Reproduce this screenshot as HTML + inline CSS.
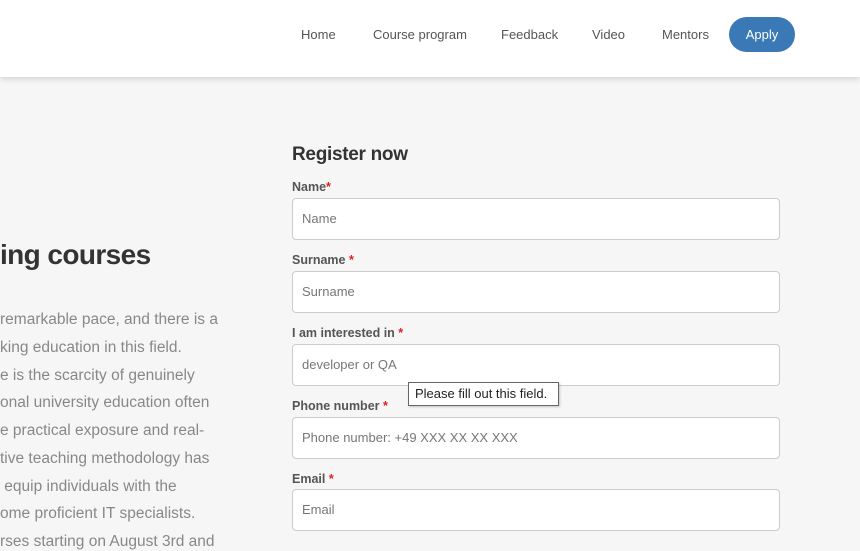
<!DOCTYPE html>
<html><head><meta charset="utf-8"><style>
*{margin:0;padding:0;box-sizing:border-box}
body{width:860px;height:550px;overflow:hidden;background:#f6f6f6;font-family:"Liberation Sans",sans-serif;position:relative}
.hdr{position:absolute;left:0;top:0;width:860px;height:77px;background:#fff;box-shadow:0 2px 6px rgba(0,0,0,.15)}
.nav{position:absolute;top:27px;font-size:13px;color:#555}
.apply{position:absolute;left:729px;top:17px;width:66px;height:35px;border-radius:18px;background:#3a78b6;color:#fff;font-size:13px;text-align:center;line-height:35px}
.h1{position:absolute;left:0;top:239px;font-size:28px;color:#333;font-weight:bold;letter-spacing:-.6px}
.p{position:absolute;left:0;font-size:15.5px;color:#888;white-space:nowrap}
.h2{position:absolute;left:292px;top:144px;font-size:19px;color:#333;font-weight:bold;letter-spacing:-.3px}
.lbl{position:absolute;left:292px;font-size:12.5px;font-weight:bold;color:#555}
.lbl b{color:#e02020}
.in{position:absolute;left:292px;width:488px;height:42px;background:#fff;border:1px solid #ccc;border-radius:4px;font-size:13px;color:#777;padding-left:9px;line-height:40px}
.tip{position:absolute;left:408px;top:382px;width:151px;height:24px;background:#fff;border:1px solid #666;box-shadow:1px 1px 2px rgba(0,0,0,.2);font-size:13px;color:#222;line-height:22px;padding-left:6px}
</style></head><body>
<div class="hdr">
<span class="nav" style="left:301px">Home</span>
<span class="nav" style="left:373px">Course program</span>
<span class="nav" style="left:501px">Feedback</span>
<span class="nav" style="left:592px">Video</span>
<span class="nav" style="left:662px">Mentors</span>
<div class="apply">Apply</div>
</div>
<div class="h1">ing courses</div>
<div class="p" style="top:311px">remarkable pace, and there is a</div>
<div class="p" style="top:339px">king education in this field.</div>
<div class="p" style="top:367px">e is the scarcity of genuinely</div>
<div class="p" style="top:394px">onal university education often</div>
<div class="p" style="top:422px">e practical exposure and real-</div>
<div class="p" style="top:450px">tive teaching methodology has</div>
<div class="p" style="top:478px">&nbsp;equip individuals with the</div>
<div class="p" style="top:505px">ome proficient IT specialists.</div>
<div class="p" style="top:533px">rses starting on August 3rd and</div>
<div class="h2">Register now</div>
<div class="lbl" style="top:180px">Name<b>*</b></div>
<div class="in" style="top:198px">Name</div>
<div class="lbl" style="top:253px">Surname<b> *</b></div>
<div class="in" style="top:271px">Surname</div>
<div class="lbl" style="top:326px">I am interested in<b> *</b></div>
<div class="in" style="top:344px">developer or QA</div>
<div class="lbl" style="top:399px">Phone number<b> *</b></div>
<div class="in" style="top:417px">Phone number: +49 XXX XX XX XXX</div>
<div class="lbl" style="top:472px">Email<b> *</b></div>
<div class="in" style="top:489px">Email</div>
<div class="tip">Please fill out this field.</div>
</body></html>
